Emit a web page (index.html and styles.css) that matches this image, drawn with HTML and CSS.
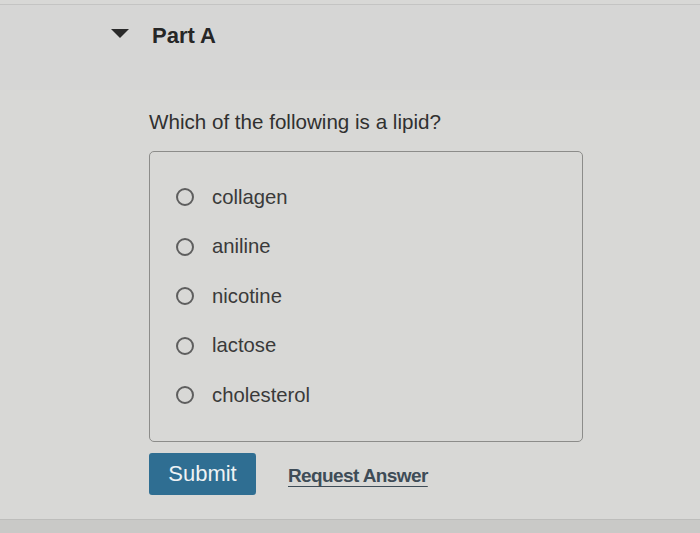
FILE: index.html
```html
<!DOCTYPE html>
<html>
<head>
<meta charset="utf-8">
<link rel="stylesheet" href="styles.css">
</head>
<body>
<div class="page">
  <header class="part-head">
    <span class="caret"></span>
    <h2 class="part-title">Part A</h2>
  </header>
  <main class="part-body">
    <p class="question">Which of the following is a lipid?</p>
    <div class="choices">
      <label class="choice"><span class="radio"></span><span class="label">collagen</span></label>
      <label class="choice"><span class="radio"></span><span class="label">aniline</span></label>
      <label class="choice"><span class="radio"></span><span class="label">nicotine</span></label>
      <label class="choice"><span class="radio"></span><span class="label">lactose</span></label>
      <label class="choice"><span class="radio"></span><span class="label">cholesterol</span></label>
    </div>
    <div class="actions">
      <button class="submit">Submit</button>
      <a class="request">Request Answer</a>
    </div>
  </main>
  <div class="bottom-strip"></div>
</div>
</body>
</html>
```

FILE: styles.css
```css
* { box-sizing: border-box; }
html, body { margin: 0; padding: 0; }
body {
  width: 700px;
  height: 533px;
  overflow: hidden;
  background: #d8d8d6;
  font-family: "Liberation Sans", Arial, sans-serif;
}
.page {
  width: 700px;
  height: 533px;
  display: flex;
  flex-direction: column;
}
.part-head {
  height: 90px;
  background: #d6d6d5;
  border-top: 4px solid #d8d8d6;
  box-shadow: inset 0 1px 0 #c4c4c3;
  display: flex;
  align-items: flex-start;
  padding: 20px 0 0 111px;
}
.caret {
  width: 0;
  height: 0;
  margin-top: 5px;
  border-left: 9px solid transparent;
  border-right: 9px solid transparent;
  border-top: 9px solid #2a2a2a;
}
.part-title {
  margin: 0 0 0 23px;
  font-size: 22px;
  font-weight: bold;
  color: #262626;
  line-height: 24px;
}
.part-body {
  flex: 1;
  padding: 17px 0 0 149px;
  background: #d8d8d6;
}
.question {
  margin: 0;
  font-size: 20.6px;
  line-height: 30px;
  color: #303030;
}
.choices {
  margin-top: 14px;
  width: 434px;
  height: 291px;
  border: 1.5px solid #8c8c8a;
  border-radius: 5px;
  padding: 31px 0 0 24px;
  display: flex;
  flex-direction: column;
  gap: 21.5px;
}
.choice {
  display: flex;
  align-items: center;
  height: 28px;
}
.radio {
  width: 18px;
  height: 18px;
  border: 2px solid #5e5e5e;
  border-radius: 50%;
  margin-left: 2px;
}
.label {
  margin-left: 18px;
  font-size: 20.3px;
  color: #3a3a3a;
}
.actions {
  margin-top: 11px;
  display: flex;
  align-items: center;
}
.submit {
  width: 107px;
  height: 42px;
  border: none;
  border-radius: 3px;
  background: #2f6e92;
  color: #eef2f4;
  font-family: "Liberation Sans", Arial, sans-serif;
  font-size: 22px;
  padding: 0;
}
.request {
  margin-left: 32px;
  margin-top: 4px;
  font-size: 19px;
  font-weight: bold;
  color: #3e4c57;
  text-decoration: underline;
  text-underline-offset: 4px;
  letter-spacing: -0.6px;
}
.bottom-strip {
  height: 14px;
  background: #c9c9c7;
  border-top: 1px solid #bdbdbb;
}
```
